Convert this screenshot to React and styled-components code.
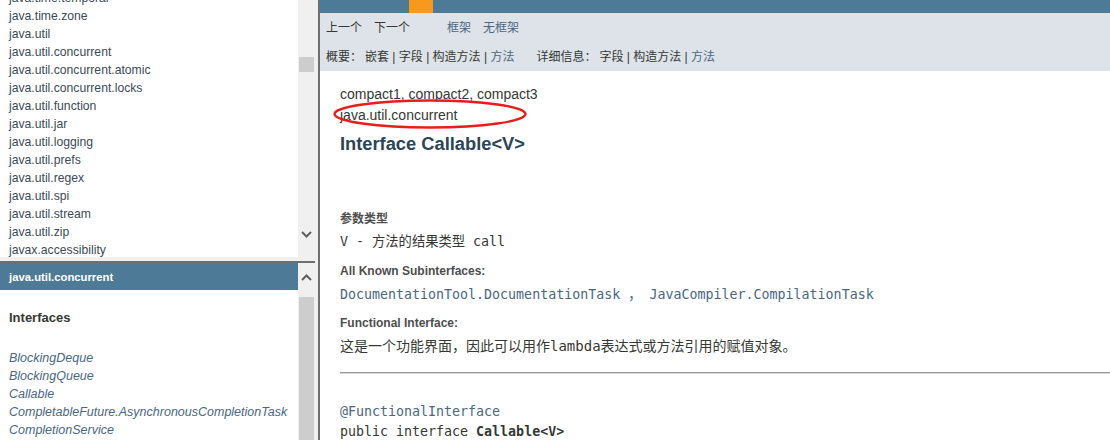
import styled, { createGlobalStyle } from 'styled-components';

const GlobalStyle = createGlobalStyle`
	html, body {
		margin: 0;
		padding: 0;
		background: #fff;
	}
	body {
		font-family: "Liberation Sans", Arial, "Noto Sans CJK SC", sans-serif;
		color: #353833;
	}
`;

const sans = `"Liberation Sans", Arial, "Noto Sans CJK SC", sans-serif`;
const mono = `"DejaVu Sans Mono", "Noto Sans CJK SC", monospace`;

const Page = styled.div`
	display: flex;
	width: 1110px;
	height: 440px;
	overflow: hidden;
	background: #fff;
`;

const LeftColumn = styled.div`
	display: flex;
	flex-direction: column;
	width: 315px;
	flex-shrink: 0;
`;

const Frame = styled.div`
	display: flex;
	height: ${(p) => p.height || 'auto'};
	flex: ${(p) => (p.grow ? 1 : 'none')};
	overflow: hidden;
	background: #fff;
`;

const FrameBody = styled.div`
	flex: 1;
	overflow: hidden;
`;

const HSplit = styled.div`
	height: 6px;
	flex-shrink: 0;
	background: #f0f0f0;
	border-bottom: 2px solid #6e6e6e;
	box-sizing: border-box;
`;

const VSplit = styled.div`
	width: 5px;
	flex-shrink: 0;
	background: #f0f0f0;
	border-right: 2px solid #6e6e6e;
	box-sizing: border-box;
`;

const Scrollbar = styled.div`
	width: 17px;
	flex-shrink: 0;
	background: #f0f0f0;
	display: flex;
	flex-direction: column;
	align-items: center;
`;

const Thumb = styled.div`
	width: 15px;
	height: ${(p) => p.size};
	margin-top: ${(p) => p.offset};
	background: #cdcdcd;
	flex-shrink: 0;
`;

const Arrow = styled.div`
	display: flex;
	align-items: center;
	justify-content: center;
	width: 17px;
	height: 17px;
	margin-top: ${(p) => p.offset || '0'};
	flex-shrink: 0;
`;

const Chevron = ({ up }) => (
	<svg width="11" height="7" viewBox="0 0 11 7">
		<polyline
			points={up ? '1,6 5.5,1.5 10,6' : '1,1 5.5,5.5 10,1'}
			fill="none"
			stroke="#606060"
			strokeWidth="2"
		/>
	</svg>
);

const PackageList = styled.ul`
	list-style: none;
	margin: -11px 0 0;
	padding: 0 0 0 9px;
`;

const PackageItem = styled.li`
	font-size: 12.2px;
	line-height: 18px;
	color: #3c4a57;
	white-space: nowrap;
`;

const FrameHeader = styled.div`
	height: 25px;
	line-height: 25px;
	padding: 2px 0 0 9px;
	background: #4d7a97;
	color: #fff;
	font-size: 11.3px;
	font-weight: bold;
`;

const SectionTitle = styled.h2`
	margin: 20px 0 0 9px;
	font-size: 13px;
	line-height: 16px;
	font-weight: bold;
	color: #353833;
`;

const ClassList = styled.ul`
	list-style: none;
	margin: 23px 0 0;
	padding: 0 0 0 9px;
`;

const ClassItem = styled.li`
	font-size: 12.5px;
	line-height: 18px;
	font-style: italic;
	color: #4a6782;
	white-space: nowrap;
`;

const RightFrame = styled.div`
	flex: 1;
	display: flex;
	flex-direction: column;
	overflow: hidden;
	min-width: 0;
`;

const TopNav = styled.div`
	height: 13px;
	background: #4d7a97;
	padding-left: 89px;
	flex-shrink: 0;
`;

const NavTab = styled.div`
	width: 24px;
	height: 13px;
	background: #f8981d;
`;

const SubNav = styled.div`
	height: 58px;
	background: #dee3e9;
	flex-shrink: 0;
	padding-left: 6px;
	font-size: 12px;
	font-family: ${sans};
`;

const NavRow = styled.div`
	display: flex;
	align-items: center;
	height: ${(p) => p.h};
	padding-top: ${(p) => p.pt || '0'};
	white-space: nowrap;
`;

const NavGroup = styled.span`
	margin-left: ${(p) => p.gap || '0'};
	color: ${(p) => (p.link ? '#4a6782' : '#353833')};
`;

const Link = styled.span`
	color: #4a6782;
`;

const Content = styled.div`
	padding: 13px 0 0 20px;
	font-family: ${sans};
`;

const Line = styled.div`
	font-size: 14px;
	line-height: 21px;
	color: #353833;
	white-space: nowrap;
`;

const PackageLine = styled(Line)`
	position: relative;
	display: inline-block;
`;

const Annotation = styled.svg`
	position: absolute;
	left: -8px;
	top: -7px;
	pointer-events: none;
`;

const Title = styled.h1`
	margin: 6px 0 0;
	font-size: 18.3px;
	line-height: 24px;
	font-weight: bold;
	color: #2c4557;
`;

const Label = styled.div`
	margin-top: ${(p) => p.mt};
	font-size: 12px;
	line-height: 16px;
	font-weight: bold;
	color: #4e4e4e;
`;

const Code = styled.div`
	margin-top: ${(p) => p.mt || '0'};
	font-family: ${mono};
	font-size: ${(p) => p.size || '13.3px'};
	line-height: 20px;
	color: ${(p) => (p.link ? '#4a6782' : '#353833')};
	white-space: nowrap;
`;

const Strong = styled.b`
	font-weight: bold;
`;

const Rule = styled.hr`
	margin: 16px 0 0;
	border: none;
	border-top: 1px solid #9b9b9b;
	border-bottom: 1px solid #d6d6d6;
	height: 0;
`;

const packages = [
	'java.time.temporal',
	'java.time.zone',
	'java.util',
	'java.util.concurrent',
	'java.util.concurrent.atomic',
	'java.util.concurrent.locks',
	'java.util.function',
	'java.util.jar',
	'java.util.logging',
	'java.util.prefs',
	'java.util.regex',
	'java.util.spi',
	'java.util.stream',
	'java.util.zip',
	'javax.accessibility',
];

const interfaces = [
	'BlockingDeque',
	'BlockingQueue',
	'Callable',
	'CompletableFuture.AsynchronousCompletionTask',
	'CompletionService',
];

const App = () => (
	<>
		<GlobalStyle />
		<Page>
			<LeftColumn>
				<Frame height="257px">
					<FrameBody>
						<PackageList>
							{packages.map((name) => (
								<PackageItem key={name}>{name}</PackageItem>
							))}
						</PackageList>
					</FrameBody>
					<Scrollbar>
						<Thumb size="15px" offset="57px" />
						<Arrow offset="154px">
							<Chevron />
						</Arrow>
					</Scrollbar>
				</Frame>
				<HSplit />
				<Frame grow>
					<FrameBody>
						<FrameHeader>java.util.concurrent</FrameHeader>
						<SectionTitle>Interfaces</SectionTitle>
						<ClassList>
							{interfaces.map((name) => (
								<ClassItem key={name}>{name}</ClassItem>
							))}
						</ClassList>
					</FrameBody>
					<Scrollbar>
						<Arrow offset="6px">
							<Chevron up />
						</Arrow>
						<Thumb size="200px" offset="11px" />
					</Scrollbar>
				</Frame>
			</LeftColumn>
			<VSplit />
			<RightFrame>
				<TopNav>
					<NavTab />
				</TopNav>
				<SubNav>
					<NavRow h="26px">
						<NavGroup>上一个</NavGroup>
						<NavGroup gap="12px">下一个</NavGroup>
						<NavGroup gap="37px" link>框架</NavGroup>
						<NavGroup gap="12px" link>无框架</NavGroup>
					</NavRow>
					<NavRow h="30px" pt="1px">
						<NavGroup>概要：</NavGroup>
						<NavGroup gap="3px">
							嵌套 | 字段 | 构造方法 | <Link>方法</Link>
						</NavGroup>
						<NavGroup gap="22px">详细信息：</NavGroup>
						<NavGroup gap="3px">
							字段 | 构造方法 | <Link>方法</Link>
						</NavGroup>
					</NavRow>
				</SubNav>
				<Content>
					<Line>compact1, compact2, compact3</Line>
					<div>
						<PackageLine>
							java.util.concurrent
							<Annotation width="198" height="32" viewBox="0 0 198 32">
								<ellipse
									cx="98"
									cy="16"
									rx="95.5"
									ry="13.5"
									fill="none"
									stroke="#ea1c1c"
									strokeWidth="2.4"
								/>
							</Annotation>
						</PackageLine>
					</div>
					<Title>Interface Callable&lt;V&gt;</Title>
					<Label mt="55px">参数类型</Label>
					<Code mt="5px">V - 方法的结果类型 call</Code>
					<Label mt="11px">All Known Subinterfaces:</Label>
					<Code mt="6px" link>
						DocumentationTool.DocumentationTask ，  JavaCompiler.CompilationTask
					</Code>
					<Label mt="10px">Functional Interface:</Label>
					<Code mt="5px" size="14px">
						这是一个功能界面，因此可以用作lambda表达式或方法引用的赋值对象。
					</Code>
					<Rule />
					<Code mt="28px" link>@FunctionalInterface</Code>
					<Code>
						public interface <Strong>Callable&lt;V&gt;</Strong>
					</Code>
				</Content>
			</RightFrame>
		</Page>
	</>
);

export default App;
